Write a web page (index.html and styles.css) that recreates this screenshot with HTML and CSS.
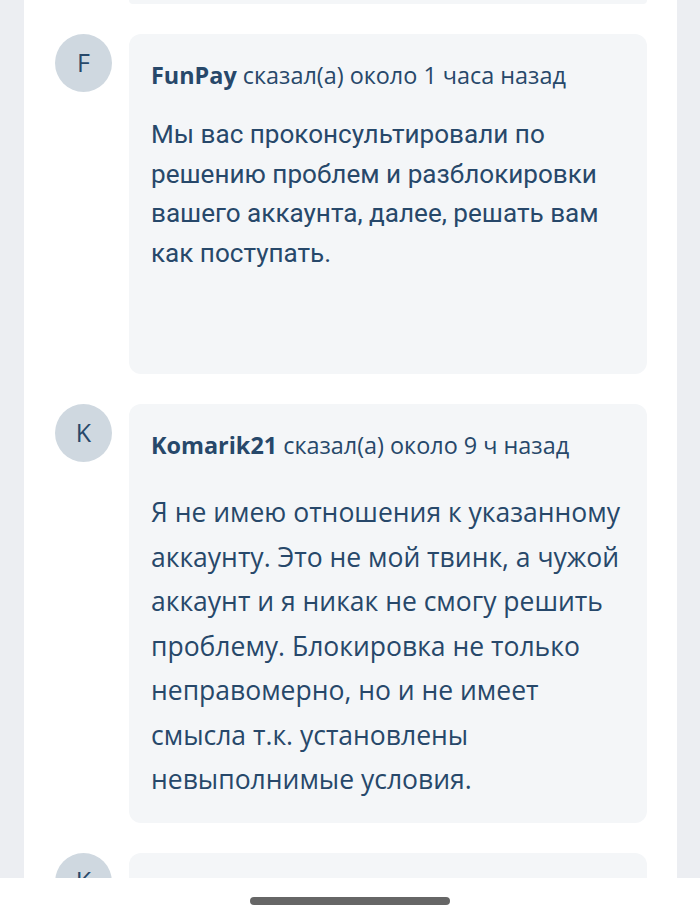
FILE: index.html
```html
<!DOCTYPE html>
<html lang="ru">
<head>
<meta charset="utf-8">
<link rel="stylesheet" href="styles.css">
</head>
<body>
<main class="panel">
  <div class="item item-prev">
    <div class="spacer"></div>
    <div class="card card-stub"></div>
  </div>
  <div class="item">
    <div class="avatar">F</div>
    <div class="card card-tall">
      <div class="meta"><b>FunPay</b> сказал(а) около 1 часа назад</div>
      <p class="msg msg-roboto">Мы вас проконсультировали по решению проблем и разблокировки вашего аккаунта, далее, решать вам как поступать.</p>
    </div>
  </div>
  <div class="item">
    <div class="avatar">K</div>
    <div class="card card-long">
      <div class="meta"><b>Komarik21</b> сказал(а) около 9 ч назад</div>
      <p class="msg msg-source">Я не имею отношения к указанному аккаунту. Это не мой твинк, а чужой аккаунт и я никак не смогу решить проблему. Блокировка не только неправомерно, но и не имеет смысла т.к. установлены невыполнимые условия.</p>
    </div>
  </div>
  <div class="item">
    <div class="avatar">K</div>
    <div class="card card-next"></div>
  </div>
</main>
<div class="home-bar"><span class="home-indicator"></span></div>
</body>
</html>
```
FILE: styles.css
```css
html, body {
  margin: 0;
  padding: 0;
  height: 924px;
  overflow: hidden;
}
body {
  background: #eceef2;
  font-family: "Open Sans", "Noto Sans", sans-serif;
  color: #27486a;
}
.panel {
  margin: 0 23px 0 24px;
  background: #ffffff;
  height: 924px;
  overflow: hidden;
  display: flex;
  flex-direction: column;
  gap: 30px;
}
.item {
  display: flex;
  align-items: flex-start;
  gap: 17px;
  padding: 0 30px 0 31px;
  flex: none;
}
.spacer { width: 57px; flex: none; }
.avatar {
  width: 57px;
  height: 58px;
  flex: none;
  border-radius: 50%;
  background: #cfd8e0;
  display: flex;
  align-items: center;
  justify-content: center;
  font-size: 25px;
  line-height: 1;
  color: #27486a;
  padding-bottom: 2px;
  box-sizing: border-box;
}
.card {
  flex: 1;
  background: #f4f6f8;
  border-radius: 12px;
  padding: 26px 22px 22px;
  box-sizing: border-box;
}
.card-stub {
  height: 4px;
  padding: 0;
  border-radius: 0 0 12px 12px;
}
.card-tall { min-height: 340px; }
.card-long { padding-bottom: 21px; }
.card-next { height: 200px; }
.meta {
  font-size: 23.4px;
  line-height: 30px;
}
.meta b { font-weight: 700; }
.msg { margin: 0; }
.msg-roboto {
  font-family: Roboto, "Open Sans", sans-serif;
  font-size: 26.1px;
  line-height: 39.7px;
  margin-top: 25px;
}
.msg-source {
  font-size: 26.5px;
  line-height: 44.5px;
  margin-top: 30px;
}
.home-bar {
  position: fixed;
  left: 0;
  right: 0;
  bottom: 0;
  height: 46px;
  background: #ffffff;
  display: flex;
  justify-content: center;
  padding-top: 19px;
  box-sizing: border-box;
}
.home-indicator {
  width: 200px;
  height: 8px;
  border-radius: 4px;
  background: #666666;
}
```
